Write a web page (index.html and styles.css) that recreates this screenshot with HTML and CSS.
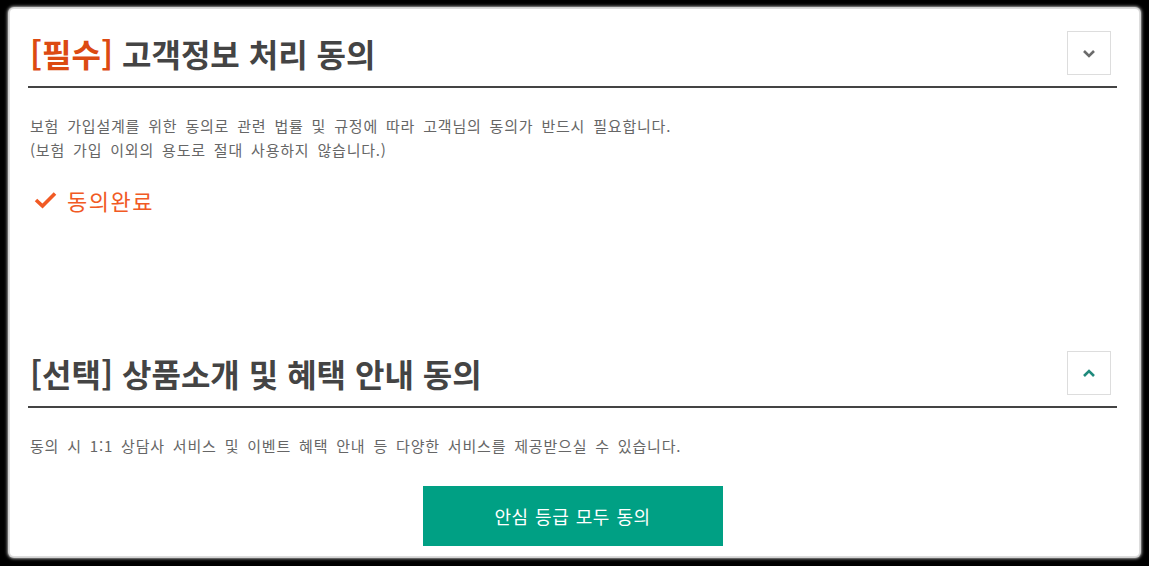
FILE: index.html
```html
<!DOCTYPE html>
<html lang="ko">

<head>
    <meta charset="UTF-8">
    <meta name="viewport" content="width=device-width, initial-scale=1.0">
    <title>약관 동의</title>

    <link rel="stylesheet" href="styles.css">
</head>

<body>
    <div class="card">
        <!-- 필수 동의 -->
        <section class="agree">
            <div class="agreeHead">
                <h2 class="agreeTitle"><span class="must">[필수]</span> 고객정보 처리 동의</h2>
                <button class="toggleBtn" type="button">
                    <svg width="14" height="9" viewBox="0 0 14 9">
                        <polyline points="2,2 7,7 12,2" fill="none" stroke="#6b6b6b" stroke-width="2.6" />
                    </svg>
                </button>
            </div>
            <p class="agreeDesc">
                보험 가입설계를 위한 동의로 관련 법률 및 규정에 따라 고객님의 동의가 반드시 필요합니다.<br>
                (보험 가입 이외의 용도로 절대 사용하지 않습니다.)
            </p>
            <div class="agreeDone">
                <svg width="24" height="18" viewBox="0 0 24 18">
                    <polyline points="2,9 8.5,15 21,2.5" fill="none" stroke="#f15a24" stroke-width="3.6" />
                </svg>
                <span>동의완료</span>
            </div>
        </section>

        <!-- 선택 동의 -->
        <section class="agree agreeOption">
            <div class="agreeHead">
                <h2 class="agreeTitle">[선택] 상품소개 및 혜택 안내 동의</h2>
                <button class="toggleBtn" type="button">
                    <svg width="14" height="9" viewBox="0 0 14 9">
                        <polyline points="2,7 7,2 12,7" fill="none" stroke="#1f8a7c" stroke-width="2.6" />
                    </svg>
                </button>
            </div>
            <p class="agreeDesc">동의 시 1:1 상담사 서비스 및 이벤트 혜택 안내 등 다양한 서비스를 제공받으실 수 있습니다.</p>
            <div class="btnWrap">
                <button class="allAgree" type="button">안심 등급 모두 동의</button>
            </div>
        </section>
    </div>
</body>

</html>
```

FILE: styles.css
```css
* {
    box-sizing: border-box;
}

body {
    margin: 0;
    background-color: #000;
    font-family: "Noto Sans CJK KR", "Noto Sans", sans-serif;
    color: #444;
}

/* 카드 */
.card {
    margin: 9px 10px 10px 10px;
    height: 547px;
    padding: 0 22px 0 18px;
    background-color: #fff;
    border-radius: 4px;
    box-shadow: 0 0 1px 2px #ddd, 0 0 3px 3px #8a8a8a;
    overflow: hidden;
}

.agreeHead {
    display: flex;
    align-items: center;
    justify-content: space-between;
    padding: 22px 6px 11px 2px;
    border-bottom: 2px solid #444;
}

.agreeTitle {
    margin: 0;
    font-size: 32px;
    font-weight: 700;
    line-height: 44px;
    color: #444;
}

.must {
    color: #dc4a12;
}

.toggleBtn {
    width: 44px;
    height: 44px;
    padding: 0;
    border: 1px solid #ddd;
    background-color: #fff;
    display: flex;
    align-items: center;
    justify-content: center;
}

.agreeDesc {
    margin: 26px 0 0 2px;
    font-size: 15px;
    line-height: 24px;
    letter-spacing: 0.8px;
    word-spacing: 3px;
    color: #666;
}

.agreeDone {
    display: flex;
    align-items: center;
    gap: 9px;
    margin: 23px 0 0 6px;
    font-size: 22px;
    line-height: 30px;
    letter-spacing: 1.5px;
    color: #f15a24;
}

.agreeOption {
    margin-top: 136px;
}

.agreeOption .agreeHead {
    padding-top: 0;
}

.btnWrap {
    display: flex;
    justify-content: center;
    margin-top: 28px;
}

.allAgree {
    width: 300px;
    height: 60px;
    border: 0;
    background-color: #00a084;
    color: #fff;
    font-family: inherit;
    font-size: 18px;
    letter-spacing: 0.5px;
    word-spacing: 1px;
}
```
